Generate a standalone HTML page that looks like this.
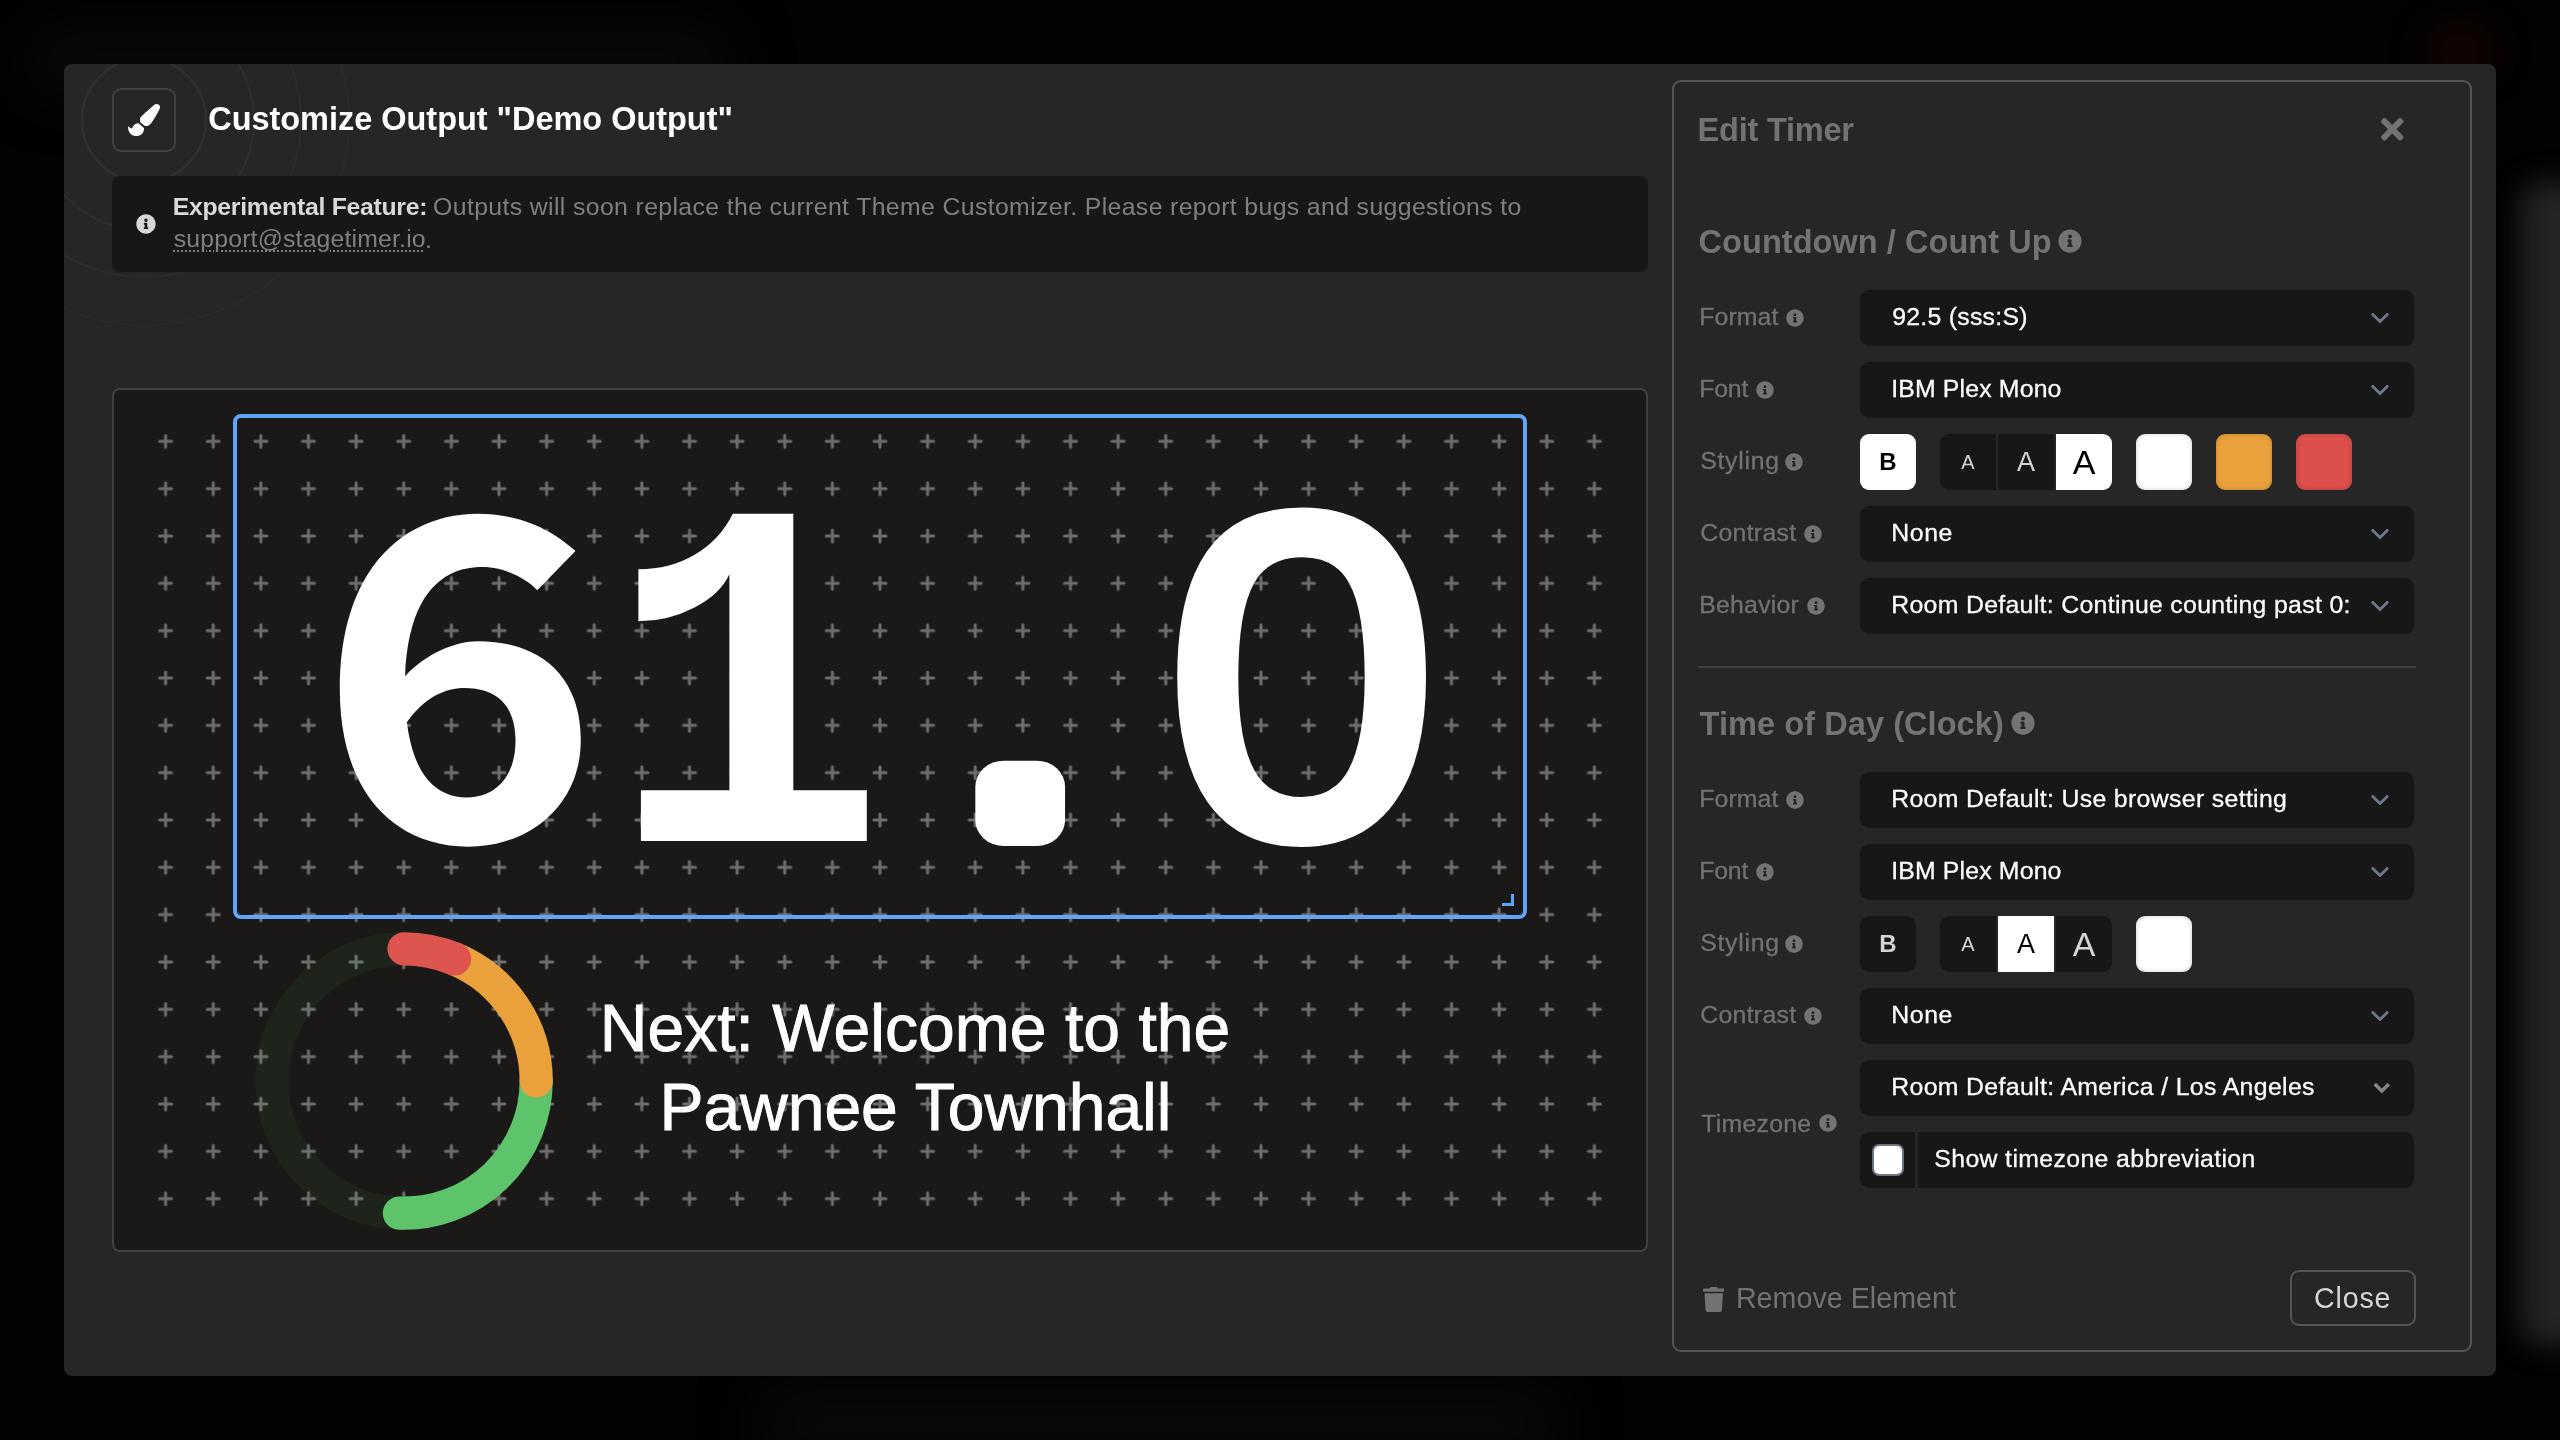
<!DOCTYPE html>
<html lang="en">
<head>
<meta charset="utf-8">
<title>Customize Output "Demo Output"</title>
<style>
*{box-sizing:border-box;margin:0;padding:0}
html,body{width:2560px;height:1440px;overflow:hidden;background:#020202}
body{font-family:"Liberation Sans",sans-serif;color:#fff;position:relative}
.backdrop{position:absolute;inset:0;background:#020202;overflow:hidden}
.backdrop i{position:absolute;display:block}
.modal{position:absolute;left:64px;top:64px;width:2432px;height:1312px;background:#262626;border-radius:8px;overflow:hidden;will-change:transform}
.rings{position:absolute;left:0;top:0;width:700px;height:500px;overflow:hidden;pointer-events:none}
.rings i{position:absolute;display:block;border:2px solid rgba(255,255,255,.04);border-radius:50%}
.hicon{position:absolute;left:48px;top:24px;width:64px;height:64px;border:2px solid #404040;border-radius:9px;background:#262626}
.hicon svg{position:absolute;left:14px;top:14px;width:32px;height:32px}
h1{position:absolute;left:144px;top:36px;height:40px;line-height:40px;font-size:32.5px;font-weight:700;white-space:nowrap;color:#fff}
.notice{position:absolute;left:48px;top:112px;width:1536px;height:96px;background:#171717;border-radius:8px;color:#808080;font-size:24.8px;line-height:32px}
.notice .ico{position:absolute;left:24px;top:38px;width:20px;height:20px}
.notice p{position:absolute;left:61px;top:16px;width:1440px;white-space:nowrap}
.notice b{color:#d9d9d9;font-weight:700}
.notice a{color:#808080;text-decoration:underline dotted;text-decoration-thickness:2px;text-underline-offset:3px}
.preview{position:absolute;left:48px;top:324px;width:1536px;height:864px;border:2px solid #414141;border-radius:8px;background:#1a1918;overflow:hidden}
.preview svg.stage{position:absolute;left:0;top:0;width:1532px;height:860px}
.sel{position:absolute;left:119px;top:24px;width:1294px;height:505px;border:4px solid #60a5fa;border-radius:8px}
.sel i{position:absolute;right:9px;bottom:9px;width:12px;height:12px;border-right:3px solid #60a5fa;border-bottom:3px solid #60a5fa}
.msg{position:absolute;left:380px;top:594px;width:840px;text-align:center;font-size:66px;line-height:78px;color:#fff;white-space:nowrap;-webkit-text-stroke:.9px #fff}
.panel{position:absolute;left:1608px;top:16px;width:800px;height:1272px;border:2px solid #555;border-radius:9px}
.panel h2{position:absolute;left:24px;height:40px;line-height:40px;font-size:32.5px;font-weight:700;color:#737373;white-space:nowrap}
.panel h2 svg{position:absolute;top:8px;width:24px;height:24px}
.x{position:absolute;left:707px;top:36px;width:22.5px;height:22.5px}
.row{position:absolute;left:0;width:796px;height:56px}
.row label{position:absolute;left:26px;top:0;height:56px;line-height:56px;font-size:24.8px;color:#737373;white-space:nowrap;-webkit-text-stroke:.3px #737373}
.row label svg{position:absolute;top:19px;width:18px;height:18px}
.select{position:absolute;left:186px;top:0;width:554px;height:56px;background:#171717;border-radius:9px;overflow:hidden}
.select>span{position:absolute;left:32px;top:0;width:458px;height:56px;line-height:56px;font-size:24.8px;color:#fff;white-space:nowrap;overflow:hidden;-webkit-text-stroke:.3px #fff}
.select svg{position:absolute;right:16px;top:10px;width:36px;height:36px}
.btn{position:absolute;top:0;width:56px;height:56px;background:#171717;color:#d4d4d4;text-align:center;line-height:56px}
.btn.on{background:#fff;color:#000}
.sw{position:absolute;top:0;width:56px;height:56px;border-radius:9px;box-shadow:inset 0 0 5px rgba(0,0,0,.2)}
hr{position:absolute;left:24px;top:584px;width:718px;height:2px;border:0;background:#3f3f3f}
.check{position:absolute;left:186px;top:0;width:554px;height:56px;background:#171717;border-radius:9px;overflow:hidden}
.check i{position:absolute;left:12px;top:12px;width:32px;height:32px;border-radius:7px;background:#fff;border:2px solid #6b7280}
.check u{position:absolute;left:55px;top:0;width:2.5px;height:56px;background:#262626}
.check span{position:absolute;left:74px;top:0;line-height:56px;font-size:24.8px;color:#fff;white-space:nowrap;-webkit-text-stroke:.3px #fff}
.remove{position:absolute;left:28px;top:1196px;height:40px;line-height:40px;font-size:28.6px;color:#737373;white-space:nowrap;padding-left:36px}
.remove svg{position:absolute;left:0.5px;top:9px;width:21.5px;height:25px}
.close{position:absolute;left:616px;top:1188px;width:126px;height:56px;border:2px solid #555;border-radius:9px;text-align:center;line-height:52px;font-size:28.6px;color:#d6d6d6;white-space:nowrap}
#t-title{letter-spacing:-0.028px;position:relative;left:0.20px;top:-0.55px}
#t-exp{letter-spacing:-0.287px;position:relative;left:-0.25px;top:-0.55px}
#t-n1{letter-spacing:0.373px;position:relative;left:-1.25px;top:-0.70px}
#t-mail{letter-spacing:0.172px;position:relative;left:0.75px;top:-0.55px}
#t-edit{letter-spacing:-0.222px;position:relative;left:-0.40px;top:1.00px}
#t-cd{letter-spacing:0.053px;position:relative;left:0.60px;top:1.00px}
#t-tod{letter-spacing:0.075px;position:relative;left:1.60px;top:0.78px}
#l-format{letter-spacing:0.100px;position:relative;left:-0.75px;top:-1.00px}
#l-format2{letter-spacing:0.100px;position:relative;left:-0.75px;top:-1.00px}
#l-font{letter-spacing:-0.167px;position:relative;left:-0.75px;top:-1.00px}
#l-font2{letter-spacing:-0.167px;position:relative;left:-0.75px;top:-1.00px}
#l-styling{letter-spacing:0.708px;position:relative;left:0.25px;top:-1.00px}
#l-styling2{letter-spacing:0.708px;position:relative;left:0.25px;top:-1.00px}
#l-contrast{letter-spacing:0.307px;position:relative;left:0.25px;top:-1.00px}
#l-contrast2{letter-spacing:0.307px;position:relative;left:0.25px;top:-1.00px}
#l-behavior{letter-spacing:0.250px;position:relative;left:-0.75px;top:-1.00px}
#l-tz{letter-spacing:0.264px;position:relative;left:1.25px;top:0.85px}
#s-fmt1{letter-spacing:0.277px;position:relative;left:0.20px;top:-1.00px}
#s-font1{letter-spacing:0.171px;position:relative;left:-0.80px;top:-1.00px}
#s-font2{letter-spacing:0.171px;position:relative;left:-0.80px;top:-1.00px}
#s-none1{letter-spacing:0.633px;position:relative;left:-0.80px;top:-1.00px}
#s-none2{letter-spacing:0.633px;position:relative;left:-0.80px;top:-1.00px}
#s-beh{letter-spacing:0.331px;position:relative;left:-0.80px;top:-1.00px}
#s-fmt2{letter-spacing:0.350px;position:relative;left:-0.80px;top:-1.00px}
#s-tz{letter-spacing:0.369px;position:relative;left:-0.80px;top:-1.00px}
#s-show{letter-spacing:0.380px;position:relative;left:74.30px;top:-1.00px}
#t-remove{letter-spacing:0.050px;position:relative;left:-2.10px;top:0.05px}
#t-close{letter-spacing:0.825px;position:relative;left:-0.30px;top:0.05px}
#t-m1{letter-spacing:0.042px;position:relative;left:1.00px;top:5.00px}
#t-m2{letter-spacing:-0.043px;position:relative;left:1.40px;top:5.60px}
</style>
</head>
<body>
<div class="backdrop">
  <i style="left:2520px;top:182px;width:200px;height:1163px;border-radius:24px;background:#242424;filter:blur(14px)"></i>
  <i style="left:2425px;top:25px;width:70px;height:50px;border-radius:50%;background:#230801;filter:blur(18px);opacity:.6"></i>
  <i style="left:30px;top:36px;width:700px;height:50px;border-radius:30px;background:#0b0b0b;filter:blur(30px)"></i>
  <i style="left:760px;top:1395px;width:800px;height:60px;border-radius:30px;background:#0a0b0f;filter:blur(30px)"></i>
</div>
<main class="modal">
  <div class="rings"><i style="left:17px;top:-7px;width:126px;height:126px;border-color:rgba(255,255,255,0.05)"></i><i style="left:-30.5px;top:-54.5px;width:221.0px;height:221.0px;border-color:rgba(255,255,255,0.04)"></i><i style="left:-78px;top:-102px;width:316px;height:316px;border-color:rgba(255,255,255,0.03)"></i><i style="left:-125.5px;top:-149.5px;width:411.0px;height:411.0px;border-color:rgba(255,255,255,0.018)"></i><i style="left:-173px;top:-197px;width:506px;height:506px;border-color:rgba(255,255,255,0.008)"></i></div>
  <header>
    <div class="hicon"><svg viewBox="0 0 512 512"><path fill="#fff" d="M167.02 309.34c-40.12 2.58-76.53 17.86-97.19 72.3-2.35 6.21-8 9.98-14.59 9.98-11.11 0-45.46-27.67-55.25-34.35C0 439.62 37.93 512 128 512c75.86 0 128-43.77 128-120.19 0-3.11-.65-6.08-.97-9.13l-88.01-73.34zM457.89 0c-15.16 0-29.37 6.71-40.21 16.45C213.27 199.05 192 203.34 192 257.09c0 13.7 3.25 26.76 8.73 38.7l63.82 53.18c7.21 1.8 14.64 3.03 22.39 3.03 62.11 0 98.11-45.47 211.16-256.46 7.38-14.35 13.9-29.85 13.9-45.99C512 20.64 486 0 457.89 0z"/></svg></div>
    <h1><span id="t-title">Customize Output "Demo Output"</span></h1>
  </header>
  <section class="notice">
    <svg class="ico" viewBox="0 0 512 512"><path fill="#d6d6d6" d="M256 8C119.043 8 8 119.083 8 256c0 136.997 111.043 248 248 248s248-111.003 248-248C504 119.083 392.957 8 256 8zm0 110c23.196 0 42 18.804 42 42s-18.804 42-42 42-42-18.804-42-42 18.804-42 42-42zm56 254c0 6.627-5.373 12-12 12h-88c-6.627 0-12-5.373-12-12v-24c0-6.627 5.373-12 12-12h12v-64h-12c-6.627 0-12-5.373-12-12v-24c0-6.627 5.373-12 12-12h64c6.627 0 12 5.373 12 12v100h12c6.627 0 12 5.373 12 12v24z"/></svg>
    <p><b id="t-exp">Experimental Feature:</b> <span id="t-n1">Outputs will soon replace the current Theme Customizer. Please report bugs and suggestions to</span><br><a id="t-mail">support@stagetimer.io</a>.</p>
  </section>
  <section class="preview">
    <svg class="stage" viewBox="0 0 1532 860">
      <defs>
        <pattern id="plus" x="27.8125" y="27.6667" width="47.6250" height="47.3333" patternUnits="userSpaceOnUse">
          <path d="M17.812 23.667h12M23.812 17.667v12" stroke="#6d6d6d" stroke-width="3" stroke-linecap="round" fill="none"/>
        </pattern>
      </defs>
      <rect x="27.812" y="27.667" width="1476.375" height="804.667" fill="url(#plus)"/>
      <g font-weight="400" fill="#fff" stroke="#fff" stroke-linejoin="round">
        <text id="g6" font-family="'Noto Sans CJK SC','Noto Sans CJK JP','DejaVu Sans',sans-serif" font-weight="700" font-size="444.6" stroke="none" transform="translate(202.1 450.5) scale(1.086 1)">6</text>
        <text id="g1" font-family="'Liberation Mono',monospace" font-weight="700" font-size="496.7" stroke="none" transform="translate(493 451) scale(0.938 1)">1</text>
        <text id="gd" font-family="'Liberation Sans',sans-serif" font-size="312" stroke-width="52" transform="translate(858.6 430) scale(1.098 1)">.</text>
        <text id="g0" font-family="'Liberation Sans',sans-serif" font-size="455" stroke-width="17.2" transform="translate(1053.5 443.9) scale(1.06 1)">0</text>
      </g>
      <circle cx="290" cy="691" r="132.2" fill="none" stroke="#5ec46b" stroke-opacity=".06" stroke-width="33.2"/>
      <path d="M422.20 691.00A132.2 132.2 0 0 1 285.39 823.12" fill="none" stroke="#5ec46b" stroke-width="33.2" stroke-linecap="round"/>
      <path d="M340.59 568.86A132.2 132.2 0 0 1 422.20 691.00" fill="none" stroke="#eaa13c" stroke-width="33.2" stroke-linecap="round"/>
      <path d="M290.00 558.80A132.2 132.2 0 0 1 340.59 568.86" fill="none" stroke="#de544f" stroke-width="33.2" stroke-linecap="round"/>
    </svg>
    <div class="sel"><i></i></div>
    <div class="msg"><span id="t-m1">Next: Welcome to the</span><br><span id="t-m2">Pawnee Townhall</span></div>
  </section>
  <aside class="panel">
    <h2 style="top:27px"><span id="t-edit">Edit Timer</span></h2>
    <svg class="x" viewBox="0 80 352 352" preserveAspectRatio="none"><path fill="#737373" d="M242.72 256l100.07-100.07c12.28-12.28 12.28-32.19 0-44.48l-22.24-22.24c-12.28-12.28-32.19-12.28-44.48 0L176 189.28 75.93 89.21c-12.28-12.28-32.19-12.28-44.48 0L9.21 111.45c-12.28 12.28-12.28 32.19 0 44.48L109.28 256 9.21 356.07c-12.28 12.28-12.28 32.19 0 44.48l22.24 22.24c12.28 12.28 32.2 12.28 44.48 0L176 322.72l100.07 100.07c12.28 12.28 32.2 12.28 44.48 0l22.24-22.24c12.28-12.28 12.28-32.19 0-44.48L242.72 256z"/></svg>
    <h2 style="top:139px"><span id="t-cd">Countdown / Count Up</span><svg viewBox="0 0 512 512" style="left:360px"><path fill="#737373" d="M256 8C119.043 8 8 119.083 8 256c0 136.997 111.043 248 248 248s248-111.003 248-248C504 119.083 392.957 8 256 8zm0 110c23.196 0 42 18.804 42 42s-18.804 42-42 42-42-18.804-42-42 18.804-42 42-42zm56 254c0 6.627-5.373 12-12 12h-88c-6.627 0-12-5.373-12-12v-24c0-6.627 5.373-12 12-12h12v-64h-12c-6.627 0-12-5.373-12-12v-24c0-6.627 5.373-12 12-12h64c6.627 0 12 5.373 12 12v100h12c6.627 0 12 5.373 12 12v24z"/></svg></h2>
    <div class="row" style="top:208px"><label><span id="l-format">Format</span><svg viewBox="0 0 512 512" style="left:85.5px"><path fill="#737373" d="M256 8C119.043 8 8 119.083 8 256c0 136.997 111.043 248 248 248s248-111.003 248-248C504 119.083 392.957 8 256 8zm0 110c23.196 0 42 18.804 42 42s-18.804 42-42 42-42-18.804-42-42 18.804-42 42-42zm56 254c0 6.627-5.373 12-12 12h-88c-6.627 0-12-5.373-12-12v-24c0-6.627 5.373-12 12-12h12v-64h-12c-6.627 0-12-5.373-12-12v-24c0-6.627 5.373-12 12-12h64c6.627 0 12 5.373 12 12v100h12c6.627 0 12 5.373 12 12v24z"/></svg></label><div class="select"><span><span id="s-fmt1">92.5 (sss:S)</span></span><svg viewBox="0 0 20 20"><path d="M6 8l4 4 4-4" fill="none" stroke="#6f778a" stroke-width="1.6" stroke-linecap="round" stroke-linejoin="round"/></svg></div></div>
    <div class="row" style="top:280px"><label><span id="l-font">Font</span><svg viewBox="0 0 512 512" style="left:56px"><path fill="#737373" d="M256 8C119.043 8 8 119.083 8 256c0 136.997 111.043 248 248 248s248-111.003 248-248C504 119.083 392.957 8 256 8zm0 110c23.196 0 42 18.804 42 42s-18.804 42-42 42-42-18.804-42-42 18.804-42 42-42zm56 254c0 6.627-5.373 12-12 12h-88c-6.627 0-12-5.373-12-12v-24c0-6.627 5.373-12 12-12h12v-64h-12c-6.627 0-12-5.373-12-12v-24c0-6.627 5.373-12 12-12h64c6.627 0 12 5.373 12 12v100h12c6.627 0 12 5.373 12 12v24z"/></svg></label><div class="select"><span><span id="s-font1">IBM Plex Mono</span></span><svg viewBox="0 0 20 20"><path d="M6 8l4 4 4-4" fill="none" stroke="#6f778a" stroke-width="1.6" stroke-linecap="round" stroke-linejoin="round"/></svg></div></div>
    <div class="row" style="top:352px"><label><span id="l-styling">Styling</span><svg viewBox="0 0 512 512" style="left:85px"><path fill="#737373" d="M256 8C119.043 8 8 119.083 8 256c0 136.997 111.043 248 248 248s248-111.003 248-248C504 119.083 392.957 8 256 8zm0 110c23.196 0 42 18.804 42 42s-18.804 42-42 42-42-18.804-42-42 18.804-42 42-42zm56 254c0 6.627-5.373 12-12 12h-88c-6.627 0-12-5.373-12-12v-24c0-6.627 5.373-12 12-12h12v-64h-12c-6.627 0-12-5.373-12-12v-24c0-6.627 5.373-12 12-12h64c6.627 0 12 5.373 12 12v100h12c6.627 0 12 5.373 12 12v24z"/></svg></label><div class="btn on" style="left:186px;border-radius:9px;font-size:24px;font-weight:700">B</div><div class="btn" style="left:266px;border-radius:9px 0 0 9px;font-size:20px">A</div><div class="btn" style="left:324px;font-size:27px">A</div><div class="btn on" style="left:382px;border-radius:0 9px 9px 0;font-size:34px">A</div><div class="sw" style="left:462px;background:#fff"></div><div class="sw" style="left:542px;background:#e9a13b"></div><div class="sw" style="left:622px;background:#dc4f4a"></div></div>
    <div class="row" style="top:424px"><label><span id="l-contrast">Contrast</span><svg viewBox="0 0 512 512" style="left:104px"><path fill="#737373" d="M256 8C119.043 8 8 119.083 8 256c0 136.997 111.043 248 248 248s248-111.003 248-248C504 119.083 392.957 8 256 8zm0 110c23.196 0 42 18.804 42 42s-18.804 42-42 42-42-18.804-42-42 18.804-42 42-42zm56 254c0 6.627-5.373 12-12 12h-88c-6.627 0-12-5.373-12-12v-24c0-6.627 5.373-12 12-12h12v-64h-12c-6.627 0-12-5.373-12-12v-24c0-6.627 5.373-12 12-12h64c6.627 0 12 5.373 12 12v100h12c6.627 0 12 5.373 12 12v24z"/></svg></label><div class="select"><span><span id="s-none1">None</span></span><svg viewBox="0 0 20 20"><path d="M6 8l4 4 4-4" fill="none" stroke="#6f778a" stroke-width="1.6" stroke-linecap="round" stroke-linejoin="round"/></svg></div></div>
    <div class="row" style="top:496px"><label><span id="l-behavior">Behavior</span><svg viewBox="0 0 512 512" style="left:107px"><path fill="#737373" d="M256 8C119.043 8 8 119.083 8 256c0 136.997 111.043 248 248 248s248-111.003 248-248C504 119.083 392.957 8 256 8zm0 110c23.196 0 42 18.804 42 42s-18.804 42-42 42-42-18.804-42-42 18.804-42 42-42zm56 254c0 6.627-5.373 12-12 12h-88c-6.627 0-12-5.373-12-12v-24c0-6.627 5.373-12 12-12h12v-64h-12c-6.627 0-12-5.373-12-12v-24c0-6.627 5.373-12 12-12h64c6.627 0 12 5.373 12 12v100h12c6.627 0 12 5.373 12 12v24z"/></svg></label><div class="select"><span><span id="s-beh">Room Default: Continue counting past 0:</span>00</span><svg viewBox="0 0 20 20"><path d="M6 8l4 4 4-4" fill="none" stroke="#6f778a" stroke-width="1.6" stroke-linecap="round" stroke-linejoin="round"/></svg></div></div>
    <hr>
    <h2 style="top:621px"><span id="t-tod">Time of Day (Clock)</span><svg viewBox="0 0 512 512" style="left:313px"><path fill="#737373" d="M256 8C119.043 8 8 119.083 8 256c0 136.997 111.043 248 248 248s248-111.003 248-248C504 119.083 392.957 8 256 8zm0 110c23.196 0 42 18.804 42 42s-18.804 42-42 42-42-18.804-42-42 18.804-42 42-42zm56 254c0 6.627-5.373 12-12 12h-88c-6.627 0-12-5.373-12-12v-24c0-6.627 5.373-12 12-12h12v-64h-12c-6.627 0-12-5.373-12-12v-24c0-6.627 5.373-12 12-12h64c6.627 0 12 5.373 12 12v100h12c6.627 0 12 5.373 12 12v24z"/></svg></h2>
    <div class="row" style="top:690px"><label><span id="l-format2">Format</span><svg viewBox="0 0 512 512" style="left:85.5px"><path fill="#737373" d="M256 8C119.043 8 8 119.083 8 256c0 136.997 111.043 248 248 248s248-111.003 248-248C504 119.083 392.957 8 256 8zm0 110c23.196 0 42 18.804 42 42s-18.804 42-42 42-42-18.804-42-42 18.804-42 42-42zm56 254c0 6.627-5.373 12-12 12h-88c-6.627 0-12-5.373-12-12v-24c0-6.627 5.373-12 12-12h12v-64h-12c-6.627 0-12-5.373-12-12v-24c0-6.627 5.373-12 12-12h64c6.627 0 12 5.373 12 12v100h12c6.627 0 12 5.373 12 12v24z"/></svg></label><div class="select"><span><span id="s-fmt2">Room Default: Use browser setting</span></span><svg viewBox="0 0 20 20"><path d="M6 8l4 4 4-4" fill="none" stroke="#6f778a" stroke-width="1.6" stroke-linecap="round" stroke-linejoin="round"/></svg></div></div>
    <div class="row" style="top:762px"><label><span id="l-font2">Font</span><svg viewBox="0 0 512 512" style="left:56px"><path fill="#737373" d="M256 8C119.043 8 8 119.083 8 256c0 136.997 111.043 248 248 248s248-111.003 248-248C504 119.083 392.957 8 256 8zm0 110c23.196 0 42 18.804 42 42s-18.804 42-42 42-42-18.804-42-42 18.804-42 42-42zm56 254c0 6.627-5.373 12-12 12h-88c-6.627 0-12-5.373-12-12v-24c0-6.627 5.373-12 12-12h12v-64h-12c-6.627 0-12-5.373-12-12v-24c0-6.627 5.373-12 12-12h64c6.627 0 12 5.373 12 12v100h12c6.627 0 12 5.373 12 12v24z"/></svg></label><div class="select"><span><span id="s-font2">IBM Plex Mono</span></span><svg viewBox="0 0 20 20"><path d="M6 8l4 4 4-4" fill="none" stroke="#6f778a" stroke-width="1.6" stroke-linecap="round" stroke-linejoin="round"/></svg></div></div>
    <div class="row" style="top:834px"><label><span id="l-styling2">Styling</span><svg viewBox="0 0 512 512" style="left:85px"><path fill="#737373" d="M256 8C119.043 8 8 119.083 8 256c0 136.997 111.043 248 248 248s248-111.003 248-248C504 119.083 392.957 8 256 8zm0 110c23.196 0 42 18.804 42 42s-18.804 42-42 42-42-18.804-42-42 18.804-42 42-42zm56 254c0 6.627-5.373 12-12 12h-88c-6.627 0-12-5.373-12-12v-24c0-6.627 5.373-12 12-12h12v-64h-12c-6.627 0-12-5.373-12-12v-24c0-6.627 5.373-12 12-12h64c6.627 0 12 5.373 12 12v100h12c6.627 0 12 5.373 12 12v24z"/></svg></label><div class="btn" style="left:186px;border-radius:9px;font-size:24px;font-weight:700">B</div><div class="btn" style="left:266px;border-radius:9px 0 0 9px;font-size:20px">A</div><div class="btn on" style="left:324px;font-size:27px">A</div><div class="btn" style="left:382px;border-radius:0 9px 9px 0;font-size:34px">A</div><div class="sw" style="left:462px;background:#fff"></div></div>
    <div class="row" style="top:906px"><label><span id="l-contrast2">Contrast</span><svg viewBox="0 0 512 512" style="left:104px"><path fill="#737373" d="M256 8C119.043 8 8 119.083 8 256c0 136.997 111.043 248 248 248s248-111.003 248-248C504 119.083 392.957 8 256 8zm0 110c23.196 0 42 18.804 42 42s-18.804 42-42 42-42-18.804-42-42 18.804-42 42-42zm56 254c0 6.627-5.373 12-12 12h-88c-6.627 0-12-5.373-12-12v-24c0-6.627 5.373-12 12-12h12v-64h-12c-6.627 0-12-5.373-12-12v-24c0-6.627 5.373-12 12-12h64c6.627 0 12 5.373 12 12v100h12c6.627 0 12 5.373 12 12v24z"/></svg></label><div class="select"><span><span id="s-none2">None</span></span><svg viewBox="0 0 20 20"><path d="M6 8l4 4 4-4" fill="none" stroke="#6f778a" stroke-width="1.6" stroke-linecap="round" stroke-linejoin="round"/></svg></div></div>
    <div class="row" style="top:978px"><div class="select"><span><span id="s-tz">Room Default: America / Los Angeles</span></span><svg viewBox="0 0 20 20"><path d="M7.1 7.8l3.9 3.9 3.9-3.9" fill="none" stroke="#858585" stroke-width="1.9" stroke-linecap="butt" stroke-linejoin="miter"/></svg></div></div>
    <div class="row" style="top:1013px"><label><span id="l-tz">Timezone</span><svg viewBox="0 0 512 512" style="left:119px"><path fill="#737373" d="M256 8C119.043 8 8 119.083 8 256c0 136.997 111.043 248 248 248s248-111.003 248-248C504 119.083 392.957 8 256 8zm0 110c23.196 0 42 18.804 42 42s-18.804 42-42 42-42-18.804-42-42 18.804-42 42-42zm56 254c0 6.627-5.373 12-12 12h-88c-6.627 0-12-5.373-12-12v-24c0-6.627 5.373-12 12-12h12v-64h-12c-6.627 0-12-5.373-12-12v-24c0-6.627 5.373-12 12-12h64c6.627 0 12 5.373 12 12v100h12c6.627 0 12 5.373 12 12v24z"/></svg></label></div>
    <div class="row" style="top:1050px"><div class="check"><i></i><u></u><span id="s-show">Show timezone abbreviation</span></div></div>
    <div class="remove"><svg viewBox="0 0 448 512" preserveAspectRatio="none"><path fill="#737373" d="M432 32H312l-9.4-18.7A24 24 0 0 0 281.1 0H166.8a23.72 23.72 0 0 0-21.4 13.3L136 32H16A16 16 0 0 0 0 48v32a16 16 0 0 0 16 16h416a16 16 0 0 0 16-16V48a16 16 0 0 0-16-16zM53.2 467a48 48 0 0 0 47.9 45h245.8a48 48 0 0 0 47.9-45L416 128H32z"/></svg><span id="t-remove">Remove Element</span></div>
    <div class="close"><span id="t-close">Close</span></div>
  </aside>
</main>
</body>
</html>
